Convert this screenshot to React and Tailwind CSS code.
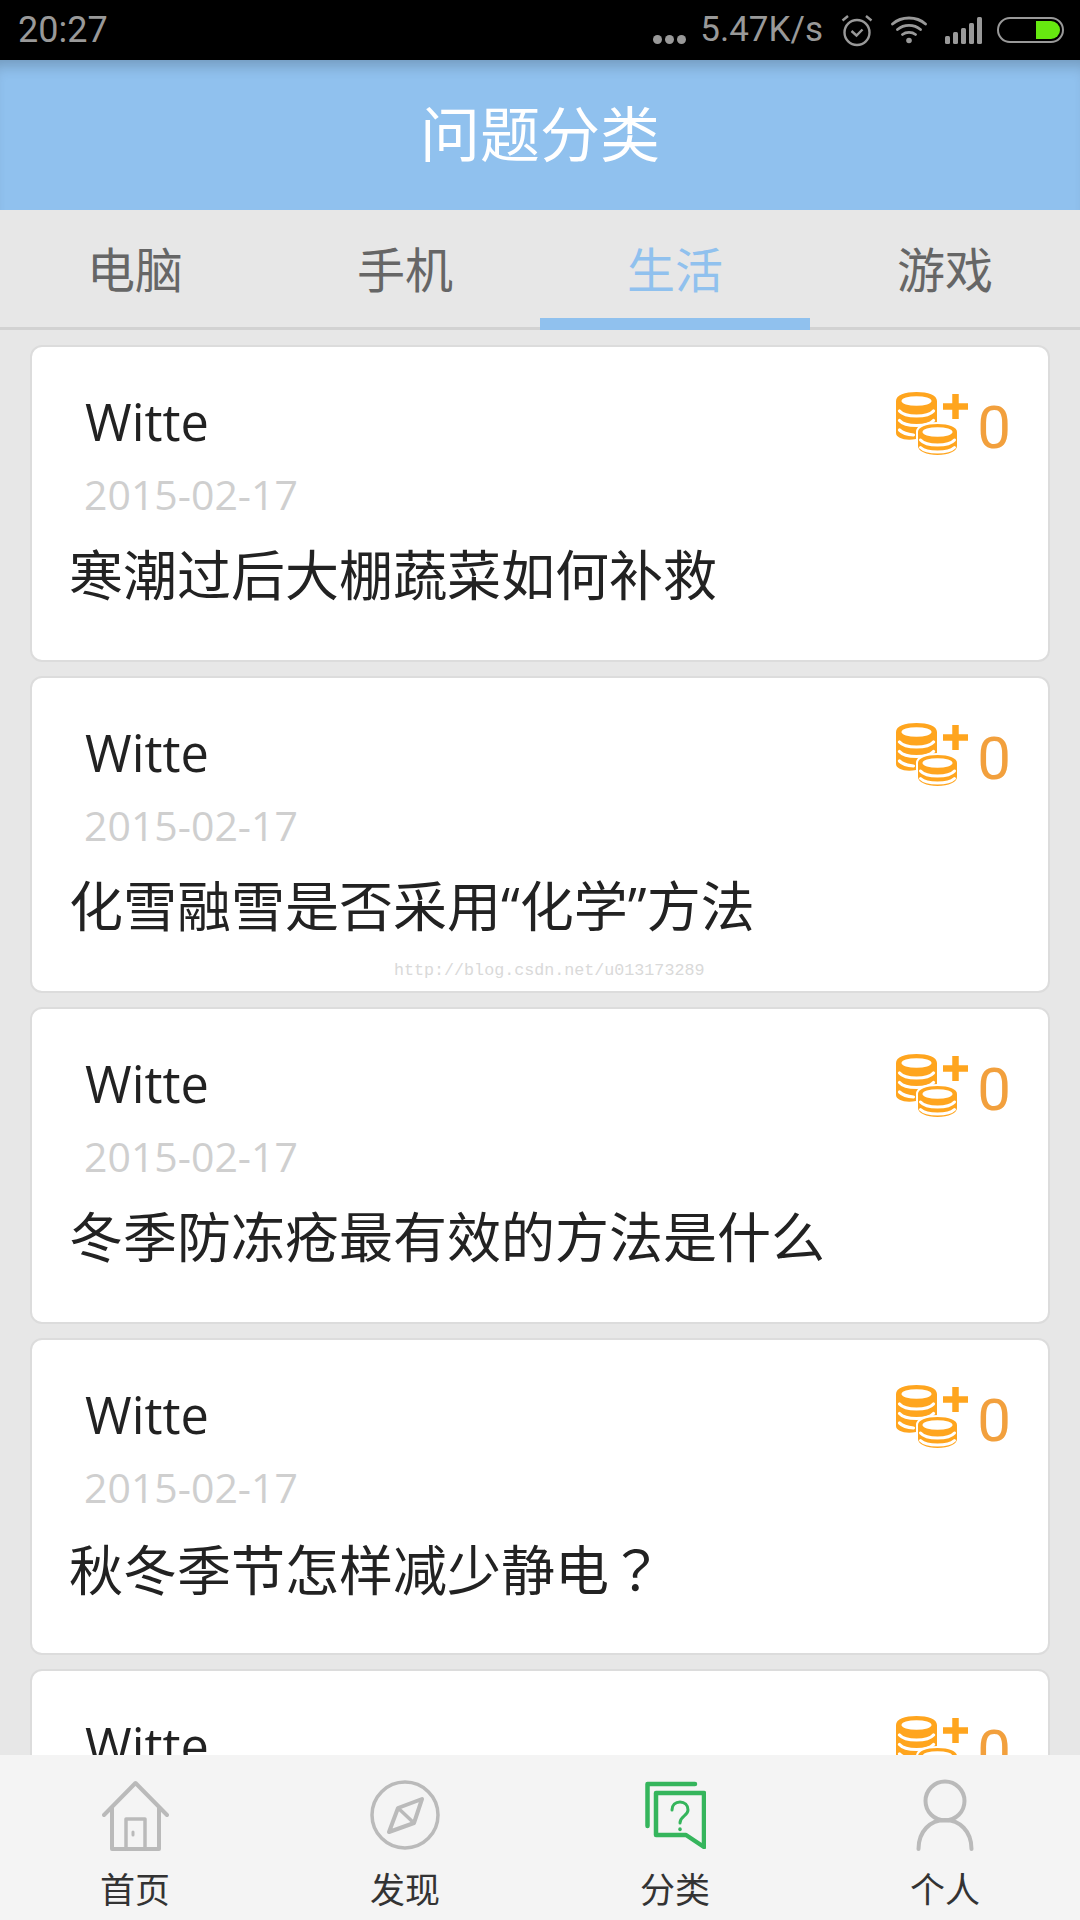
const questions = [
  '寒潮过后大棚蔬菜如何补救',
  '化雪融雪是否采用“化学”方法',
  '冬季防冻疮最有效的方法是什么',
  <>秋冬季节怎样减少静电<span className='font-["Noto_Sans_CJK_JP",sans-serif]'>？</span></>,
  '秋冬季节怎样减少静电',
];

const tabs = ['电脑', '手机', '生活', '游戏'];

const CJK = 'font-["Noto_Sans_CJK_SC","Noto_Sans",sans-serif]';

const CoinsIcon = () => (
  <svg width="72" height="64" viewBox="0 0 72 64">
    {/* big stack */}
    <path d="M0 9C0 3 9 0 20.500 0S41 3 41 9v38H20C9 49 0 46 0 41z" fill="#ffa51e" />
    <ellipse cx="20.500" cy="9" rx="15" ry="4.800" fill="#fff" />
    <path d="M3.500 19c3 3.500 9 5 17 5s14-1.500 17-5M3.500 28.500c3 3.500 9 5 17 5s14-1.500 17-5M3.500 38c3 3 7 4.500 14 5" fill="none" stroke="#fff" strokeWidth="3.200" strokeLinecap="round" />
    {/* small stack */}
    <path d="M21 40c0-6 9-9 20.500-9S62 34 62 40v14c0 6-9 10-20.500 10S21 60 21 54z" fill="#ffa51e" stroke="#fff" strokeWidth="2" />
    <ellipse cx="41.500" cy="40" rx="15" ry="4.800" fill="#fff" />
    <path d="M24.500 48c3 3.500 9 5 17 5s14-1.500 17-5M24.500 55.500c3 3 9 4.500 17 4.500s14-1.500 17-4.500" fill="none" stroke="#fff" strokeWidth="3" strokeLinecap="round" />
    {/* plus */}
    <path d="M47 14.500h25M59.500 2v25" fill="none" stroke="#ffa51e" strokeWidth="6.500" />
  </svg>
);

const AlarmIcon = () => (
  <svg width="32" height="33" viewBox="0 0 32 33" fill="none" stroke="#999" strokeWidth="2.400">
    <circle cx="16" cy="18.500" r="12.500" />
    <path d="M1.500 6.500 7 2M30.500 6.500 25 2M10.500 17l5 4.500 6-6" />
  </svg>
);

const WifiIcon = () => (
  <svg width="36" height="28" viewBox="0 0 36 28" fill="none" stroke="#999" strokeWidth="2.800" strokeLinecap="round">
    <path d="M1.500 8C10.500 0 25.500 0 34.500 8M6.500 13.500c6.500-5.500 16.500-5.500 23 0M11.500 18.500c3.500-2.800 9.500-2.800 13 0" />
    <circle cx="18" cy="24.500" r="2.800" fill="#999" stroke="none" />
  </svg>
);

const SignalIcon = () => (
  <svg width="37" height="27" viewBox="0 0 37 27" fill="#999">
    <rect x="0" y="19" width="5" height="8" rx="1.500" />
    <rect x="8" y="15" width="5" height="12" rx="1.500" />
    <rect x="16" y="11" width="5" height="16" rx="1.500" />
    <rect x="24" y="6" width="5" height="21" rx="1.500" />
    <rect x="32" y="0" width="5" height="27" rx="1.500" />
  </svg>
);

const BatteryIcon = () => (
  <svg width="67" height="26" viewBox="0 0 67 26" fill="none">
    <rect x="1" y="1" width="65" height="24" rx="12" stroke="#999" strokeWidth="2" />
    <path d="M39 4h15a9 9 0 0 1 0 18H39z" fill="#66e910" />
  </svg>
);

const HomeIcon = () => (
  <svg width="67" height="71" viewBox="0 0 67 71" fill="none" stroke="#bababa" strokeWidth="4" strokeLinecap="round" strokeLinejoin="round">
    <path d="M2 35 33.500 3 65 35" />
    <path d="M10 28v41h47V28" />
    <path d="M24 69V39h19v30" strokeWidth="3.500" />
    <path d="M31 52v3" strokeWidth="3" />
  </svg>
);

const CompassIcon = () => (
  <svg width="70" height="70" viewBox="0 0 70 70" fill="none" stroke="#bababa">
    <circle cx="35" cy="35" r="33" strokeWidth="3.500" />
    <path d="M52 19 44 43 19 52l9-24z" strokeWidth="4" strokeLinejoin="round" />
    <path d="M28 28 44 43" strokeWidth="3.500" />
  </svg>
);

const CategoryIcon = () => (
  <svg width="61" height="68" viewBox="0 0 61 68" fill="none" stroke="#35b55c" strokeWidth="4.500" strokeLinecap="round" strokeLinejoin="round">
    <path d="M2.500 45V3H50" />
    <path d="M11 12h48v54L41 54H11z" />
    <path d="M27 29c0-5 3.500-8 8-8s8 3 8 8c0 6-8 6-8 13" strokeWidth="3" />
    <path d="M35 48v.5" strokeWidth="3.500" />
  </svg>
);

const PersonIcon = () => (
  <svg width="58" height="72" viewBox="0 0 58 72" fill="none" stroke="#bababa" strokeWidth="4" strokeLinecap="round">
    <circle cx="29" cy="22" r="19.500" />
    <path d="M2.500 70c0-18 12-29 26.500-29s26.500 11 26.500 29" />
  </svg>
);

const navItems = [
  { label: '首页', icon: <HomeIcon /> },
  { label: '发现', icon: <CompassIcon /> },
  { label: '分类', icon: <CategoryIcon /> },
  { label: '个人', icon: <PersonIcon /> },
];

const QuestionCard = ({ title, watermark }) => (
  <div className="relative h-[317px] shrink-0 rounded-xl border-2 border-[#dcdcdc] bg-white flex justify-between overflow-hidden">
    <div className="flex flex-col pt-[45px]">
      <div className='ml-[53px] text-[50.500px] leading-[60px] text-[#222] font-["Open_Sans",sans-serif]'>Witte</div>
      <div className='ml-[52px] mt-[17px] text-[41px] leading-[50px] text-[#cfcfcf] font-["Open_Sans",sans-serif]'>2015-02-17</div>
      <div className='ml-[37px] mt-[21px] text-[54px] leading-[70px] text-[#222] whitespace-nowrap font-["Open_Sans","Noto_Sans_CJK_SC",sans-serif]'>{title}</div>
    </div>
    <div className="flex items-start pt-[45px] pr-[37px]">
      <CoinsIcon />
      <span className='ml-[9px] mt-[6px] text-[60px] leading-[60px] text-[#f2a03d] font-["Roboto",sans-serif]'>0</span>
    </div>
    {watermark && (
      <div className='absolute left-[362px] top-[283px] text-[16.700px] leading-[20px] text-[#d9d9d9] whitespace-nowrap font-["Liberation_Mono",monospace]'>
        http://blog.csdn.net/u013173289
      </div>
    )}
  </div>
);

const App = () => {
  return (
    <div className="w-[1080px] h-[1920px] flex flex-col bg-[#e7e7e7] overflow-hidden">
      {/* Status bar */}
      <div className='h-[60px] shrink-0 bg-black flex items-center justify-between pl-[18px] pr-[16px] text-[#999] font-["Roboto",sans-serif]'>
        <span className="text-[36px] leading-[60px]">20:27</span>
        <div className="flex items-center">
          <div className="flex gap-[3px] mt-[18px]">
            <span className="w-[9px] h-[9px] rounded-full bg-[#999]" />
            <span className="w-[9px] h-[9px] rounded-full bg-[#999]" />
            <span className="w-[9px] h-[9px] rounded-full bg-[#999]" />
          </div>
          <span className="ml-[14px] text-[35px] leading-[60px]">5.47K/s</span>
          <span className="ml-[18px]"><AlarmIcon /></span>
          <span className="ml-[18px]"><WifiIcon /></span>
          <span className="ml-[18px]"><SignalIcon /></span>
          <span className="ml-[15px]"><BatteryIcon /></span>
        </div>
      </div>

      {/* Header */}
      <div className={`h-[150px] pb-[8px] shrink-0 bg-[#90c1ee] shadow-[inset_0_14px_14px_-8px_rgba(0,0,0,0.2)] flex items-center justify-center text-white text-[60px] ${CJK}`}>
        问题分类
      </div>

      {/* Tabs */}
      <div className="h-[120px] shrink-0 flex border-b-[3px] border-[#d2d2d2]">
        {tabs.map((tab, i) => (
          <div
            key={tab}
            className={`w-[270px] h-[120px] flex items-center justify-center text-[48px] ${CJK} ${i === 2 ? 'text-[#90c1ee] border-b-[12px] border-[#90c1ee] pt-[6px]' : 'text-[#666] pb-[6px]'}`}
          >
            {tab}
          </div>
        ))}
      </div>

      {/* Question list */}
      <div className="flex-1 min-h-0 overflow-hidden flex flex-col gap-[14px] px-[30px] pt-[15px]">
        {questions.map((title, i) => (
          <QuestionCard key={i} title={title} watermark={i === 1} />
        ))}
      </div>

      {/* Bottom nav */}
      <div className="h-[165px] shrink-0 bg-[#f4f4f4] flex">
        {navItems.map((item) => (
          <div key={item.label} className="w-[270px] flex flex-col items-center pt-[24px]">
            <div className="h-[72px] flex items-center justify-center">{item.icon}</div>
            <span className={`mt-[12px] text-[35px] leading-[50px] text-[#333] ${CJK}`}>{item.label}</span>
          </div>
        ))}
      </div>
    </div>
  );
};

export default App;
